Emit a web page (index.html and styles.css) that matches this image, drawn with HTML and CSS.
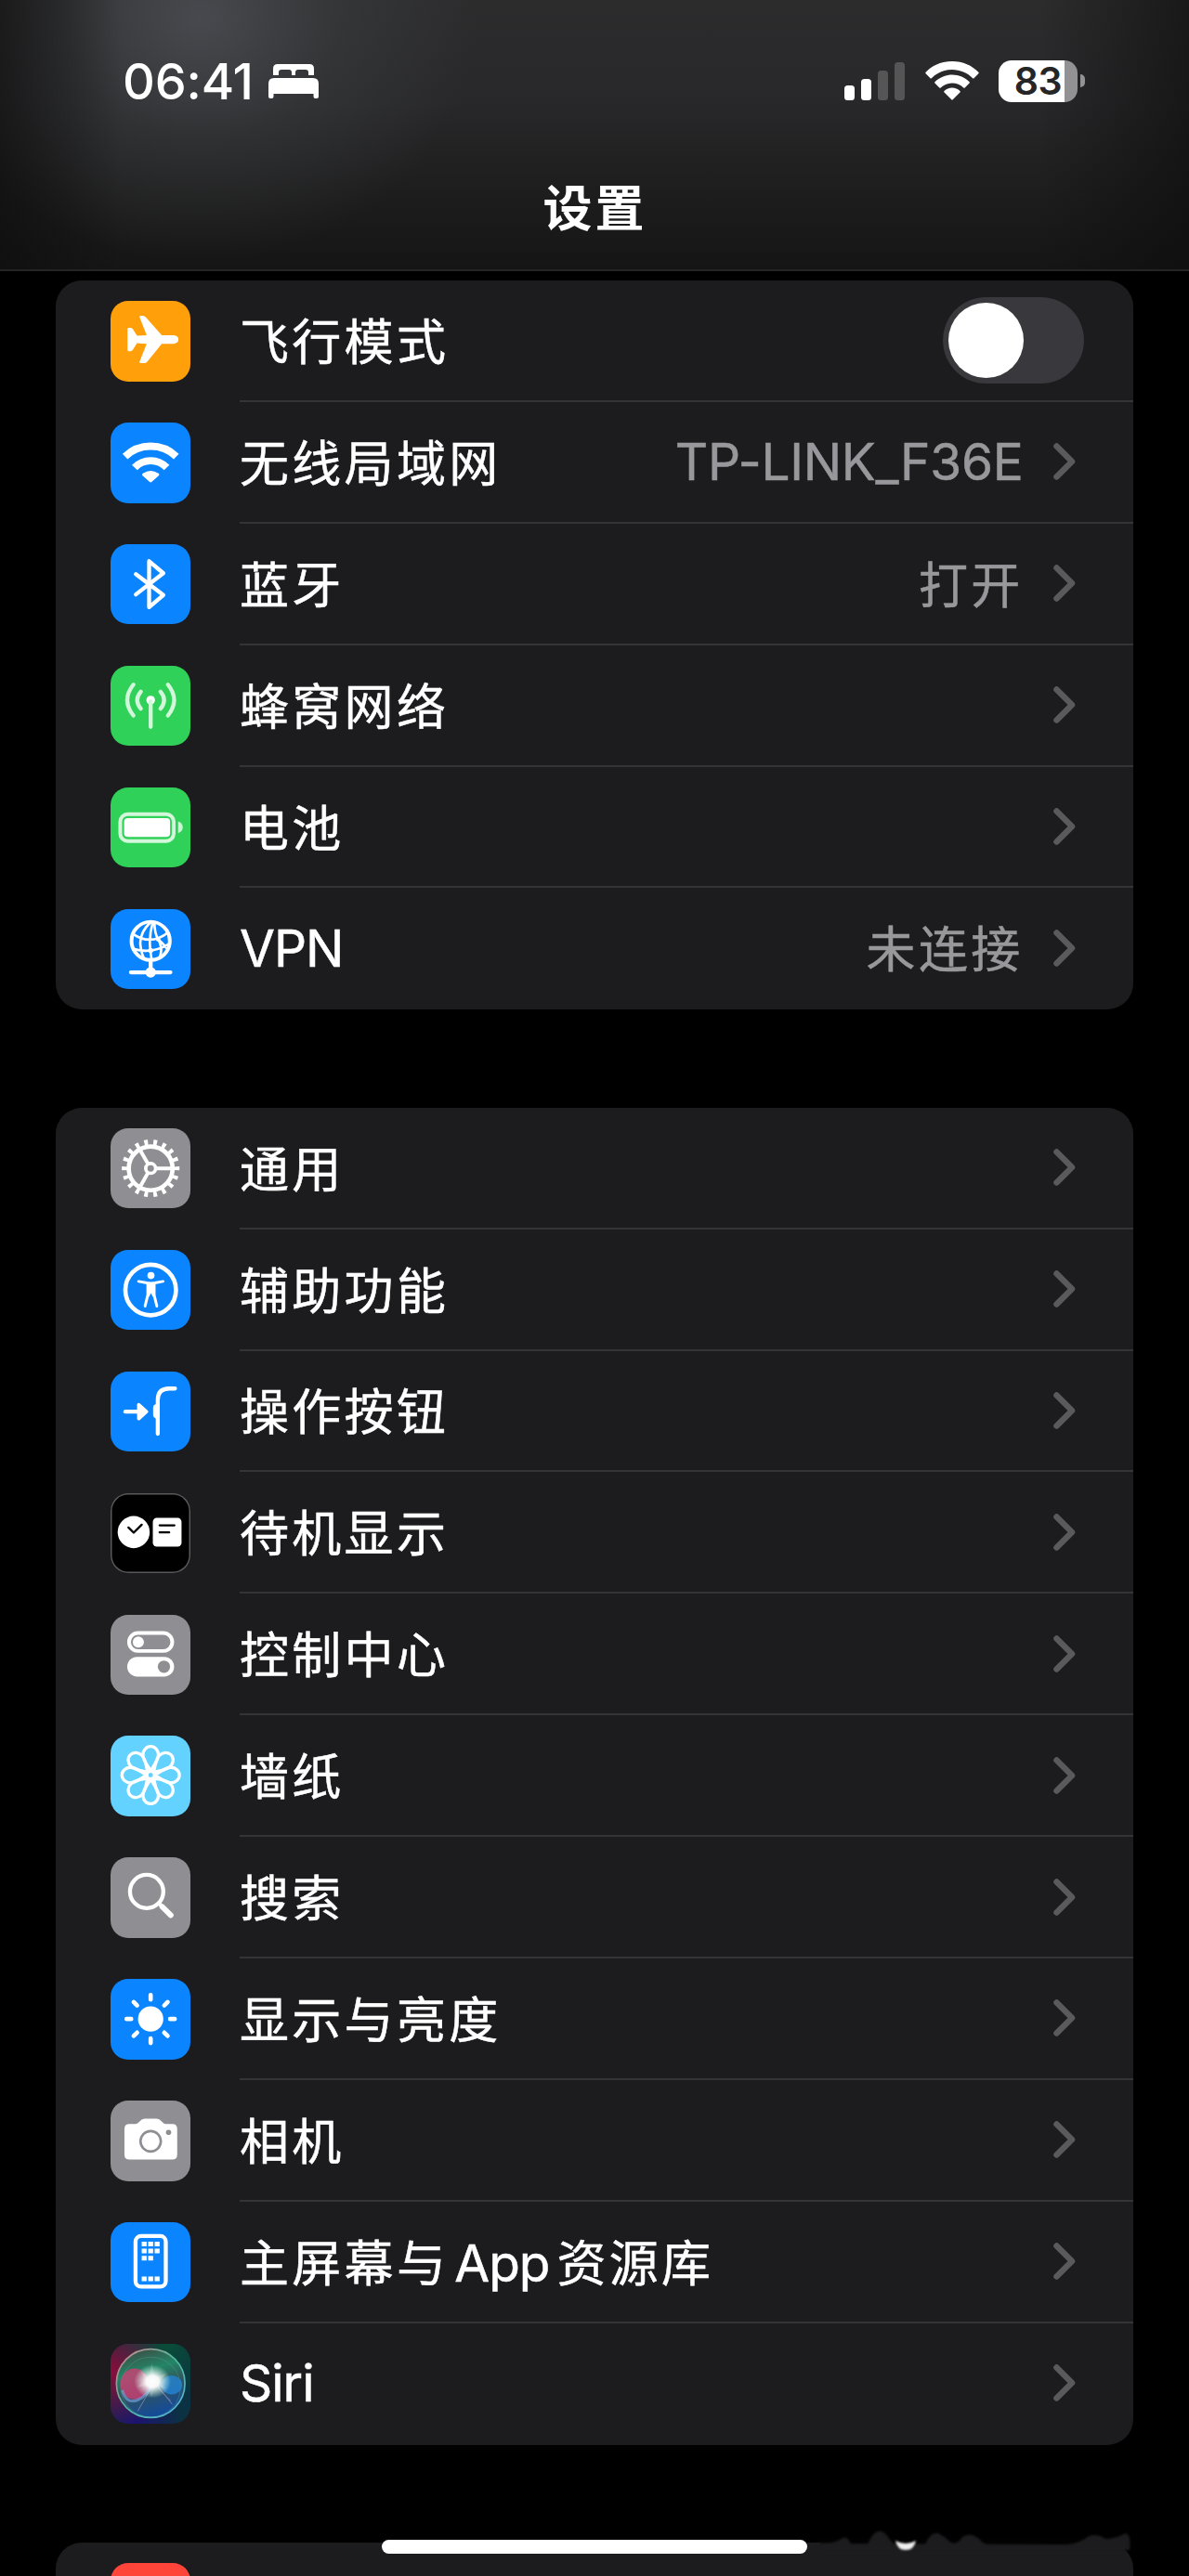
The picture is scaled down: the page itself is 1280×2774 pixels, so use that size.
FILE: index.html
```
<!DOCTYPE html>
<html lang="zh-CN">
<head>
    <meta charset="UTF-8">
    <meta name="viewport" content="width=device-width, initial-scale=1.0">
    <title>设置</title>
    <link rel="stylesheet" href="styles.css">
</head>
<body>
    <!-- shared shapes -->
    <svg class="defs" width="0" height="0">
        <symbol id="chevron" viewBox="0 0 24 40">
            <path d="M3.5 3.5L20 20L3.5 36.5" fill="none" stroke="#5a5a5c" stroke-width="6.5" stroke-linecap="round" stroke-linejoin="round"/>
        </symbol>
        <path id="petal" d="M130 116C122 97 105 84 105 62A25 27 0 0 1 155 62C155 84 138 97 130 116Z"/>
    </svg>

    <header class="header">
        <div class="status-bar">
            <div class="status-left">
                <span class="time">06:41</span>
                <svg class="bed" viewBox="0 0 54 37">
                    <path d="M5 12V5Q5 0 10 0H44Q49 0 49 5V12H43V9Q43 6 40 6H32Q29 6 29 9V12H25V9Q25 6 22 6H14Q11 6 11 9V12Z"/>
                    <path d="M0 21Q0 15 6 15H48Q54 15 54 21V35Q54 37 52 37H50.500Q48.500 37 48.500 35V32H5.500V35Q5.500 37 3.500 37H2Q0 37 0 35Z"/>
                </svg>
            </div>
            <div class="status-right">
                <div class="signal">
                    <i class="bar bar1"></i>
                    <i class="bar bar2"></i>
                    <i class="bar bar3 off"></i>
                    <i class="bar bar4 off"></i>
                </div>
                <svg class="wifi" viewBox="0 0 58 42">
                    <path d="M29 0C40.500 0 50.500 4.500 57.400 11.800Q58 12.500 57.400 13.200L52.500 18.200Q51.800 18.800 51.200 18.200C45.500 12.500 37.500 9 29 9S12.500 12.500 6.800 18.200Q6.200 18.800 5.500 18.200L.6 13.200Q0 12.500 .6 11.800C7.500 4.500 17.500 0 29 0Z"/>
                    <path d="M29 14.500C36.500 14.500 43 17.500 47.600 22.200Q48.200 22.900 47.600 23.600L42.700 28.500Q42 29.100 41.300 28.500C38 25.300 33.700 23.500 29 23.500S20 25.300 16.700 28.500Q16 29.100 15.300 28.500L10.400 23.600Q9.800 22.900 10.400 22.200C15 17.500 21.500 14.500 29 14.500Z"/>
                    <path d="M29 28.500C32.300 28.500 35.300 29.800 37.500 32Q38.200 32.800 37.500 33.500L29.700 41.300Q29 42 28.300 41.300L20.500 33.500Q19.800 32.800 20.500 32C22.700 29.800 25.700 28.500 29 28.500Z"/>
                </svg>
                <div class="battery">
                    <div class="battery-body">83</div>
                    <div class="battery-tip"></div>
                </div>
            </div>
        </div>
        <h1 class="title">设置</h1>
    </header>

    <main class="list">
        <section class="group">
            <div class="row">
                <svg class="icon orange" viewBox="0 0 260 260">
                    <path d="M205 111Q220 113 220 125Q220 137 205 139H166L119 197Q115 202 109 202H98Q93 202 94 197L117 139Q100 139 86 137L72 159Q69 163 65 163H59Q55 163 55 159V91Q55 87 59 87H65Q69 87 72 91L86 113Q100 111 117 111L94 53Q93 48 98 48H104Q110 48 114 53L166 111Z"/>
                </svg>
                <div class="row-body">
                    <span class="label">飞行模式</span>
                    <span class="switch"><i class="knob"></i></span>
                </div>
            </div>
            <div class="row">
                <svg class="icon blue" viewBox="0 0 260 260">
                    <g class="line" stroke-width="24" stroke-linecap="butt">
                        <path d="M47 110A121 121 0 0 1 213 110"/>
                        <path d="M78 146A72 72 0 0 1 182 146"/>
                    </g>
                    <path d="M104 172Q100 168 105 165Q130 148 155 165Q160 168 156 172L134 192Q130 196 126 192Z"/>
                </svg>
                <div class="row-body">
                    <span class="label">无线局域网</span>
                    <span class="value latin">TP-LINK_F36E</span>
                    <svg class="chevron"><use href="#chevron"/></svg>
                </div>
            </div>
            <div class="row">
                <svg class="icon blue" viewBox="0 0 260 260">
                    <path class="line" stroke-width="13" d="M82 97L171 165L125 204V55L171 94L82 163"/>
                </svg>
                <div class="row-body">
                    <span class="label">蓝牙</span>
                    <span class="value">打开</span>
                    <svg class="chevron"><use href="#chevron"/></svg>
                </div>
            </div>
            <div class="row">
                <svg class="icon green" viewBox="0 0 260 260">
                    <circle cx="130" cy="111" r="14"/>
                    <path class="line soft" stroke-width="13" d="M130 115V198"/>
                    <path class="line soft" stroke-width="13" d="M98 84Q75 111 98 139M162 84Q185 111 162 139M74 61Q34 111 74 161M186 61Q226 111 186 161"/>
                </svg>
                <div class="row-body">
                    <span class="label">蜂窝网络</span>
                    <svg class="chevron"><use href="#chevron"/></svg>
                </div>
            </div>
            <div class="row">
                <svg class="icon green" viewBox="0 0 260 260">
                    <rect class="line soft" x="31.500" y="86.500" width="173" height="87" rx="24" stroke-width="12"/>
                    <rect x="44" y="99" width="149" height="61" rx="12"/>
                    <path fill="#c8f5d2" d="M219 110Q234 115 234 129Q234 143 219 148Z"/>
                </svg>
                <div class="row-body">
                    <span class="label">电池</span>
                    <svg class="chevron"><use href="#chevron"/></svg>
                </div>
            </div>
            <div class="row">
                <svg class="icon blue" viewBox="0 0 260 260">
                    <circle class="line" cx="130" cy="103" r="62" stroke-width="12"/>
                    <path class="line" stroke-width="8" d="M130 42Q92 78 97 118Q100 145 109 160M137 42Q120 100 133 162M142 42Q143 80 154 97Q178 120 184 129M154 97Q172 130 158 158M72 80Q130 120 186 76M74 129Q135 147 191 112"/>
                    <path class="line" stroke-width="13" d="M130 168V205M66 205H194"/>
                    <circle cx="130" cy="205" r="17"/>
                    <circle cx="154" cy="98" r="7"/>
                    <circle cx="130" cy="134" r="8"/>
                </svg>
                <div class="row-body">
                    <span class="label latin">VPN</span>
                    <span class="value">未连接</span>
                    <svg class="chevron"><use href="#chevron"/></svg>
                </div>
            </div>
        </section>

        <section class="group">
            <div class="row">
                <svg class="icon gray" viewBox="0 0 260 260">
                    <circle class="line" cx="130" cy="130" r="71" stroke-width="14"/>
                    <circle class="line" cx="130" cy="130" r="84" stroke-width="19" pathLength="180" stroke-dasharray="4 6" stroke-dashoffset="2" stroke-linecap="butt"/>
                    <circle class="line" cx="130" cy="130" r="16" stroke-width="11"/>
                    <path class="line" stroke-width="12" d="M150 130H199M120 113L95 69M120 147L95 191"/>
                </svg>
                <div class="row-body">
                    <span class="label">通用</span>
                    <svg class="chevron"><use href="#chevron"/></svg>
                </div>
            </div>
            <div class="row">
                <svg class="icon blue" viewBox="0 0 260 260">
                    <circle class="line" cx="130" cy="130" r="82" stroke-width="14"/>
                    <circle cx="131" cy="83" r="11.500"/>
                    <path class="line" stroke-width="9" d="M91 102L118 107Q131 109 144 107L170 102"/>
                    <path class="line" stroke-width="9" d="M121 110V145L112 182M141 110V145L150 182"/>
                    <path d="M117 106H145V146L137 152L131 140L125 152L117 146Z"/>
                </svg>
                <div class="row-body">
                    <span class="label">辅助功能</span>
                    <svg class="chevron"><use href="#chevron"/></svg>
                </div>
            </div>
            <div class="row">
                <svg class="icon blue" viewBox="0 0 260 260">
                    <path class="line" stroke-width="13" d="M48 130H92"/>
                    <path d="M86 107Q87 99 95 103L120 126Q124 130 120 134L95 157Q87 161 86 153Z"/>
                    <path d="M153 106V152H146Q138 150 138 140V118Q138 108 146 106Z"/>
                    <path class="line" stroke-width="13" d="M153 202V92Q153 55 190 55H209"/>
                </svg>
                <div class="row-body">
                    <span class="label">操作按钮</span>
                    <svg class="chevron"><use href="#chevron"/></svg>
                </div>
            </div>
            <div class="row">
                <svg class="icon black" viewBox="0 0 260 260">
                    <circle cx="75" cy="126" r="52"/>
                    <rect x="137" y="80" width="93" height="93" rx="13"/>
                    <path class="line ink" stroke-width="7" d="M58 111L75 128L101 102M159 104H207M159 127H190"/>
                </svg>
                <div class="row-body">
                    <span class="label">待机显示</span>
                    <svg class="chevron"><use href="#chevron"/></svg>
                </div>
            </div>
            <div class="row">
                <svg class="icon gray" viewBox="0 0 260 260">
                    <rect class="line" x="60" y="59" width="140" height="58" rx="29" stroke-width="12"/>
                    <circle cx="90" cy="88" r="18"/>
                    <rect x="54" y="136" width="152" height="64" rx="32"/>
                    <circle cx="173" cy="168" r="20" fill="#8e8e93"/>
                </svg>
                <div class="row-body">
                    <span class="label">控制中心</span>
                    <svg class="chevron"><use href="#chevron"/></svg>
                </div>
            </div>
            <div class="row">
                <svg class="icon cyan" viewBox="0 0 260 260">
                    <g class="line" stroke-width="10">
                        <use href="#petal"/>
                        <use href="#petal" transform="rotate(45 130 128)"/>
                        <use href="#petal" transform="rotate(90 130 128)"/>
                        <use href="#petal" transform="rotate(135 130 128)"/>
                        <use href="#petal" transform="rotate(180 130 128)"/>
                        <use href="#petal" transform="rotate(225 130 128)"/>
                        <use href="#petal" transform="rotate(270 130 128)"/>
                        <use href="#petal" transform="rotate(315 130 128)"/>
                        <circle cx="130" cy="128" r="13"/>
                    </g>
                </svg>
                <div class="row-body">
                    <span class="label">墙纸</span>
                    <svg class="chevron"><use href="#chevron"/></svg>
                </div>
            </div>
            <div class="row">
                <svg class="icon gray" viewBox="0 0 260 260">
                    <circle class="line" cx="117" cy="111" r="54" stroke-width="13"/>
                    <path class="line" stroke-width="13" d="M157 150L166 159"/>
                    <path class="line" stroke-width="18" d="M168 161L195 188"/>
                </svg>
                <div class="row-body">
                    <span class="label">搜索</span>
                    <svg class="chevron"><use href="#chevron"/></svg>
                </div>
            </div>
            <div class="row">
                <svg class="icon blue" viewBox="0 0 260 260">
                    <circle cx="130" cy="130" r="41"/>
                    <path class="line" stroke-width="14" d="M130 52V67M130 193V208M52 130H67M193 130H208M75 75L86 86M174 174L185 185M75 185L86 174M174 86L185 75"/>
                </svg>
                <div class="row-body">
                    <span class="label">显示与亮度</span>
                    <svg class="chevron"><use href="#chevron"/></svg>
                </div>
            </div>
            <div class="row">
                <svg class="icon gray" viewBox="0 0 260 260">
                    <path d="M45 92Q45 76 61 76H80Q87 76 92 70Q101 59 110 59H150Q159 59 168 70Q173 76 180 76H200Q216 76 216 92V175Q216 191 200 191H61Q45 191 45 175Z"/>
                    <circle cx="130" cy="132" r="33" fill="none" stroke="#8e8e93" stroke-width="8"/>
                    <circle cx="188" cy="103" r="8.500" fill="#8e8e93"/>
                </svg>
                <div class="row-body">
                    <span class="label">相机</span>
                    <svg class="chevron"><use href="#chevron"/></svg>
                </div>
            </div>
            <div class="row">
                <svg class="icon blue" viewBox="0 0 260 260">
                    <rect class="line" x="81" y="45" width="98" height="164" rx="18" stroke-width="13"/>
                    <path d="M101 63h16v15h-16zM122 63h16v15h-16zM143 63h16v15h-16zM101 86h16v15h-16zM122 86h16v15h-16zM143 86h16v15h-16zM101 109h16v15h-16zM122 109h16v15h-16zM101 176h16v15h-16zM122 176h16v15h-16zM143 176h16v15h-16z"/>
                </svg>
                <div class="row-body">
                    <span class="label">主屏幕与<span class="app">App</span>资源库</span>
                    <svg class="chevron"><use href="#chevron"/></svg>
                </div>
            </div>
            <div class="row">
                <svg class="icon" viewBox="0 0 260 260">
                    <defs>
                        <radialGradient id="siriRed" cx="0" cy=".35" r=".7">
                            <stop offset="0" stop-color="#8c0c3c"/>
                            <stop offset="1" stop-color="#8c0c3c" stop-opacity="0"/>
                        </radialGradient>
                        <radialGradient id="siriGreen" cx=".7" cy="0" r=".7">
                            <stop offset="0" stop-color="#0a4d38"/>
                            <stop offset="1" stop-color="#0a4d38" stop-opacity="0"/>
                        </radialGradient>
                        <radialGradient id="siriBlue" cx=".3" cy="1" r=".6">
                            <stop offset="0" stop-color="#1d1272"/>
                            <stop offset="1" stop-color="#1d1272" stop-opacity="0"/>
                        </radialGradient>
                        <linearGradient id="siriRing" x1="0" y1="0" x2="1" y2="1">
                            <stop offset="0" stop-color="#d9808c"/>
                            <stop offset=".5" stop-color="#4fb89c"/>
                            <stop offset="1" stop-color="#58b4dc"/>
                        </linearGradient>
                        <linearGradient id="siriOrb" x1=".2" y1="0" x2=".5" y2="1">
                            <stop offset="0" stop-color="#3f4a45"/>
                            <stop offset=".35" stop-color="#238566"/>
                            <stop offset=".6" stop-color="#32545c"/>
                            <stop offset="1" stop-color="#124b9c"/>
                        </linearGradient>
                        <radialGradient id="siriGlow">
                            <stop offset="0" stop-color="#fff"/>
                            <stop offset=".35" stop-color="#fff" stop-opacity=".95"/>
                            <stop offset="1" stop-color="#cfe" stop-opacity="0"/>
                        </radialGradient>
                    </defs>
                    <rect width="260" height="260" fill="#0b3242"/>
                    <rect width="260" height="260" fill="url(#siriGreen)"/>
                    <rect width="260" height="260" fill="url(#siriBlue)"/>
                    <rect width="260" height="260" fill="url(#siriRed)"/>
                    <circle cx="130" cy="128" r="111" fill="url(#siriOrb)" stroke="url(#siriRing)" stroke-width="5"/>
                    <circle cx="130" cy="140" r="97" fill="none" stroke="#69c3ae" stroke-width="2" opacity=".4"/>
                    <ellipse cx="78" cy="130" rx="46" ry="50" fill="#d83c76" opacity=".75"/>
                    <path d="M38 150Q50 196 88 182Q118 172 132 132" fill="none" stroke="#7ba9e8" stroke-width="9" opacity=".6"/>
                    <ellipse cx="198" cy="133" rx="34" ry="31" fill="#2388dc" opacity=".75"/>
                    <path d="M137 134L88 218M145 134L195 185M150 134L200 196" stroke="#b7a6cc" stroke-width="3" opacity=".55"/>
                    <ellipse cx="136" cy="122" rx="60" ry="54" fill="url(#siriGlow)"/>
                    <path d="M134 62L144 108L180 96L158 124L182 146L146 138L132 172L122 137L84 140L112 120L98 88L124 108Z" fill="#fff" opacity=".16"/>
                </svg>
                <div class="row-body">
                    <span class="label latin">Siri</span>
                    <svg class="chevron"><use href="#chevron"/></svg>
                </div>
            </div>
        </section>

        <section class="group">
            <div class="row">
                <svg class="icon red" viewBox="0 0 260 260"></svg>
                <div class="row-body"></div>
            </div>
        </section>
    </main>

    <!-- smudge along the top edge of the last group -->
    <svg class="smudge" viewBox="0 0 380 50">
        <path d="M0 30H332Q322 26 320 36H280L4 35Z" fill="#020202"/>
        <path d="M0 34Q16 36 24 31Q32 24 36 36H54Q64 12 76 28Q82 38 88 36H116Q122 22 130 24Q138 28 142 33Q150 38 156 28Q164 22 174 30Q180 38 190 36H270Q284 34 292 27Q302 24 310 30Q320 30 332 24Q338 26 336 42H0Z" fill="#1c1c1e"/>
        <path d="M84 32Q95 38 106 32Q104 42 95 42T84 32Z" fill="#eee"/>
    </svg>
    <div class="home-indicator"></div>
</body>
</html>
```
FILE: styles.css
```
* {
    box-sizing: border-box;
}
body {
    position: relative;
    margin: 0;
    width: 1280px;
    height: 2774px;
    overflow: hidden;
    background: #000;
    color: #fff;
    font-family: "Noto Sans CJK SC", sans-serif;
    font-size: 53px;
}
.defs {
    position: absolute;
}

/* status bar + title */
.header {
    height: 292px;
    border-bottom: 2px solid #242425;
    background:
        linear-gradient(to right, rgba(12, 12, 12, 0.6) 0, rgba(12, 12, 12, 0) 130px, rgba(12, 12, 12, 0) 1120px, rgba(12, 12, 12, 0.6) 1280px),
        radial-gradient(ellipse 300px 260px at 215px 20px, rgba(84, 86, 92, 0.7), rgba(70, 72, 76, 0.35) 50%, rgba(60, 60, 60, 0)),
        linear-gradient(to bottom, #2c2c2d 0, #28282a 110px, #1d1d1d 210px, #151515 292px);
}
.status-bar {
    display: flex;
    justify-content: space-between;
    align-items: center;
    height: 174px;
    padding: 0 112px 0 132px;
}
.status-left,
.status-right,
.battery {
    display: flex;
    align-items: center;
}
.time {
    width: 157px;
    font-family: Inter, sans-serif;
    font-size: 54px;
    font-weight: 500;
    letter-spacing: -0.2px;
}
.bed {
    width: 54px;
    height: 37px;
    fill: #fff;
}
.signal {
    display: flex;
    align-items: flex-end;
    gap: 6.500px;
    height: 42px;
    margin-right: 22px;
}
.bar {
    width: 11.500px;
    border-radius: 3.500px;
    background: #fff;
}
.bar1 {
    height: 16px;
}
.bar2 {
    height: 23px;
}
.bar3 {
    height: 32px;
}
.bar4 {
    height: 41px;
}
.bar.off {
    background: #555556;
}
.wifi {
    width: 58px;
    height: 42px;
    margin-right: 21px;
    fill: #fff;
}
.battery {
    gap: 3px;
}
.battery-body {
    width: 85px;
    height: 45px;
    border-radius: 14px;
    background: linear-gradient(to right, #fff 71px, #929294 71px);
    color: #262627;
    font-family: Inter, sans-serif;
    font-size: 41px;
    font-weight: 600;
    line-height: 45px;
    text-align: center;
    letter-spacing: -0.5px;
}
.battery-tip {
    width: 5px;
    height: 14px;
    border-radius: 0 5px 5px 0;
    background: #929294;
}
.title {
    margin: 0;
    line-height: 94px;
    text-align: center;
    font-size: 53px;
    font-weight: 700;
    letter-spacing: 3px;
    text-indent: 1px;
}

/* setting groups */
.list {
    height: 2482px;
    padding: 10px 60px 0;
    overflow: hidden;
}
.group {
    margin-bottom: 105.400px;
    border-radius: 28px;
    background: #1c1c1e;
    overflow: hidden;
}
.row {
    display: flex;
    align-items: center;
    height: 130.900px;
    padding-left: 59px;
}
.icon {
    width: 86.400px;
    height: 86.400px;
    margin-right: 52.600px;
    border-radius: 19px;
    fill: #fff;
}
.icon .line {
    fill: none;
    stroke: #fff;
    stroke-linecap: round;
    stroke-linejoin: round;
}
.icon .line[stroke-linecap="butt"] {
    stroke-linecap: butt;
}
.icon .soft {
    stroke: #d2f7db;
}
.icon .ink {
    stroke: #000;
}
.orange {
    background: #ff9f0a;
}
.blue {
    background: #0a84ff;
}
.green {
    background: #30d158;
}
.gray {
    background: #8e8e93;
}
.cyan {
    background: #64d2ff;
}
.red {
    background: #ff453a;
}
.black {
    background: #000;
    box-shadow: inset 0 0 0 1.500px #59595b;
}
.row-body {
    display: flex;
    flex: 1;
    align-items: center;
    height: 100%;
    padding-right: 53px;
    border-bottom: 2px solid #343436;
}
.row:last-child .row-body {
    border-bottom-color: transparent;
}
.label,
.value {
    padding-bottom: 3px;
    letter-spacing: 3.300px;
    white-space: nowrap;
    -webkit-text-stroke: 0.5px currentColor;
}
.label {
    flex: 1;
}
.value {
    color: #98989c;
}
.latin,
.app {
    font-family: Inter, sans-serif;
    font-size: 55px;
    letter-spacing: -1px;
}
.latin {
    padding-bottom: 0;
}
.app {
    margin: 0 8px 0 6px;
}
.value.latin {
    letter-spacing: -0.3px;
}
.chevron {
    width: 24px;
    height: 40px;
    margin: 0 9.500px 0 32px;
}
.switch {
    display: flex;
    align-items: center;
    width: 152px;
    height: 93px;
    padding-left: 6px;
    border-radius: 47px;
    background: #39393d;
}
.knob {
    width: 81px;
    height: 81px;
    border-radius: 50%;
    background: #fff;
}

/* overlays at the bottom edge */
.smudge {
    position: absolute;
    left: 880px;
    top: 2704px;
    width: 380px;
    height: 50px;
    filter: blur(1px);
}
.home-indicator {
    position: absolute;
    left: 411px;
    top: 2735px;
    width: 458px;
    height: 15px;
    border-radius: 8px;
    background: #fff;
}
```
